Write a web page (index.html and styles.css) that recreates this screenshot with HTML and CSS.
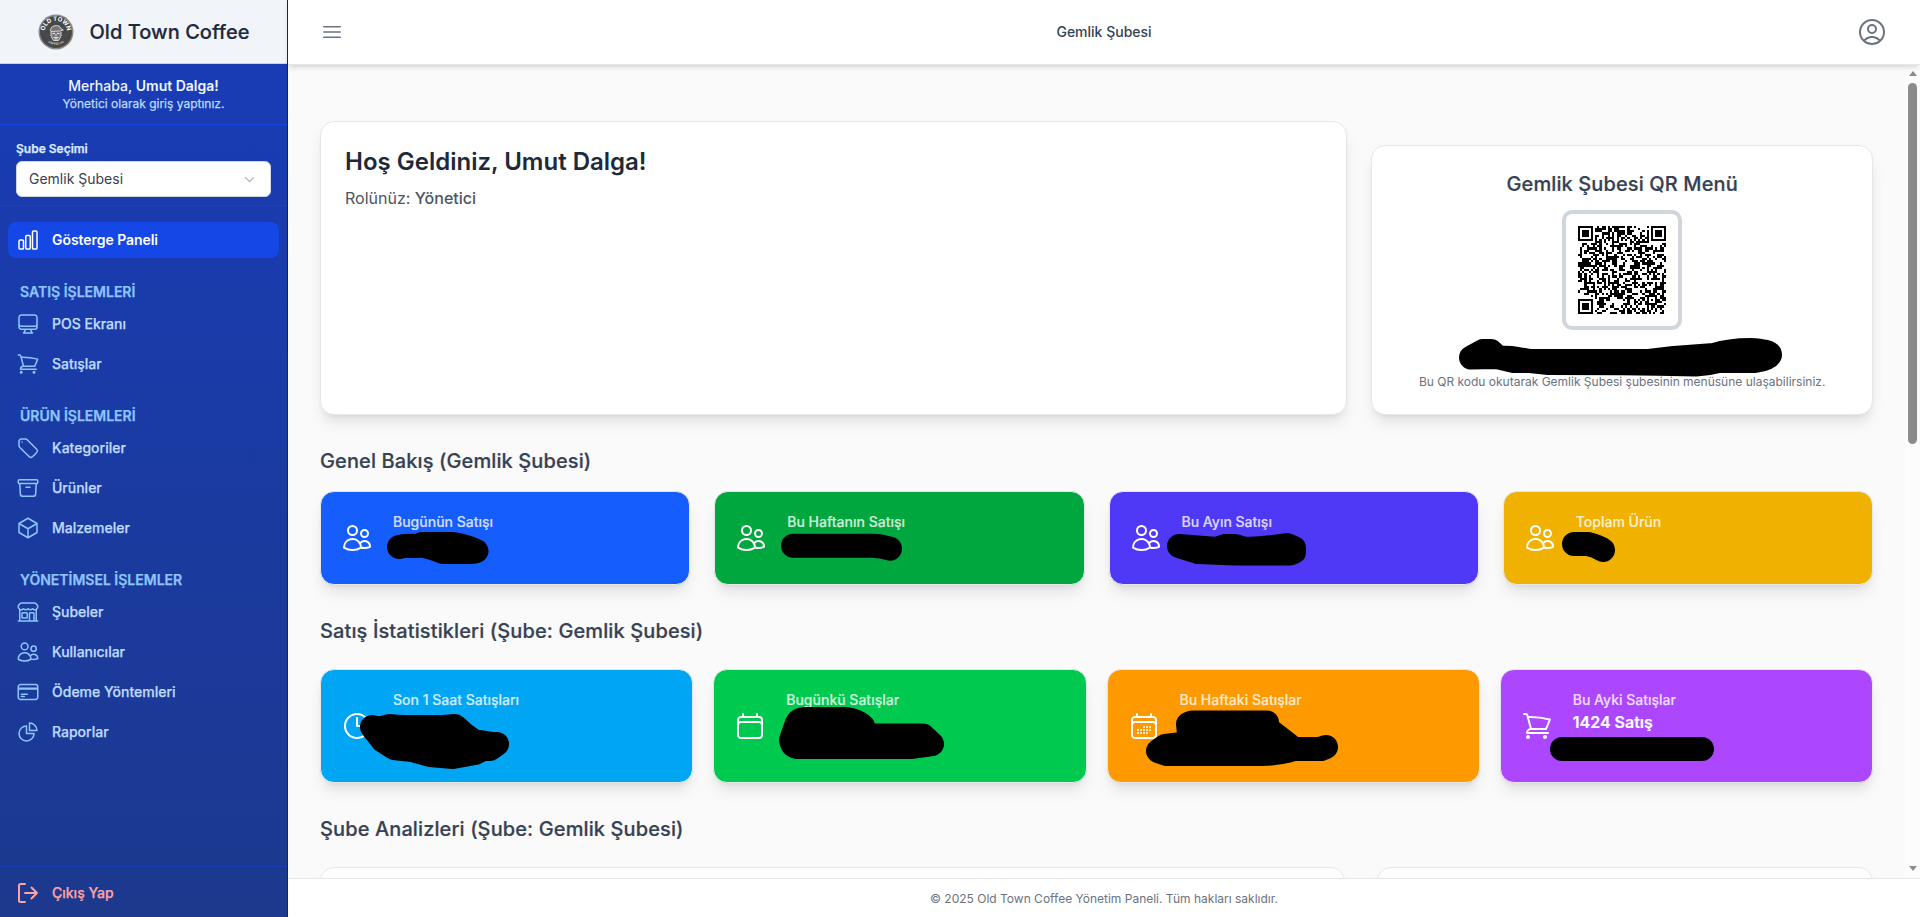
FILE: index.html
```html
<!DOCTYPE html>
<html lang="tr">
<head>
<meta charset="utf-8">
<title>Old Town Coffee</title>
<link rel="stylesheet" href="styles.css">
</head>
<body>
<svg class="sprite" aria-hidden="true">
  <symbol id="chart" viewBox="0 0 24 24"><path d="M3 13.125C3 12.504 3.504 12 4.125 12h2.25c.621 0 1.125.504 1.125 1.125v6.75C7.5 20.496 6.996 21 6.375 21h-2.25A1.125 1.125 0 0 1 3 19.875v-6.75ZM9.75 8.625c0-.621.504-1.125 1.125-1.125h2.25c.621 0 1.125.504 1.125 1.125v11.25c0 .621-.504 1.125-1.125 1.125h-2.25a1.125 1.125 0 0 1-1.125-1.125V8.625ZM16.5 4.125c0-.621.504-1.125 1.125-1.125h2.25C20.496 3 21 3.504 21 4.125v15.75c0 .621-.504 1.125-1.125 1.125h-2.25a1.125 1.125 0 0 1-1.125-1.125V4.125Z"/></symbol>
  <symbol id="monitor" viewBox="0 0 24 24"><path d="M9 17.25v1.007a3 3 0 0 1-.879 2.122L7.5 21h9l-.621-.621A3 3 0 0 1 15 18.257V17.25m6-12V15a2.25 2.25 0 0 1-2.25 2.25H5.25A2.25 2.25 0 0 1 3 15V5.25m18 0A2.25 2.25 0 0 0 18.75 3H5.25A2.25 2.25 0 0 0 3 5.25m18 0V12a2.25 2.25 0 0 1-2.25 2.25H5.25A2.25 2.25 0 0 1 3 12V5.25"/></symbol>
  <symbol id="cart" viewBox="0 0 24 24"><path d="M2.25 3h1.386c.51 0 .955.343 1.087.835l.383 1.437M7.5 14.25a3 3 0 0 0-3 3h15.75m-12.75-3h11.218c1.121-2.3 2.1-4.684 2.924-7.138a60.114 60.114 0 0 0-16.536-1.84M7.5 14.25 5.106 5.272M6 20.25a.75.75 0 1 1-1.5 0 .75.75 0 0 1 1.5 0Zm12.75 0a.75.75 0 1 1-1.5 0 .75.75 0 0 1 1.5 0Z"/></symbol>
  <symbol id="tag" viewBox="0 0 24 24"><path d="M9.568 3H5.25A2.25 2.25 0 0 0 3 5.25v4.318c0 .597.237 1.17.659 1.591l9.581 9.581c.699.699 1.78.872 2.607.33a18.095 18.095 0 0 0 5.223-5.223c.542-.827.369-1.908-.33-2.607L11.16 3.66A2.25 2.25 0 0 0 9.568 3Z"/><path d="M6 6h.008v.008H6V6Z"/></symbol>
  <symbol id="archive" viewBox="0 0 24 24"><path d="m20.25 7.5-.625 10.632a2.25 2.25 0 0 1-2.247 2.118H6.622a2.25 2.25 0 0 1-2.247-2.118L3.75 7.5M10 11.25h4M3.375 7.5h17.25c.621 0 1.125-.504 1.125-1.125v-1.5c0-.621-.504-1.125-1.125-1.125H3.375c-.621 0-1.125.504-1.125 1.125v1.5c0 .621.504 1.125 1.125 1.125Z"/></symbol>
  <symbol id="cube" viewBox="0 0 24 24"><path d="m21 7.5-9-5.25L3 7.5m18 0-9 5.25m9-5.25v9l-9 5.25M3 7.5l9 5.25M3 7.5v9l9 5.25m0-9v9"/></symbol>
  <symbol id="store" viewBox="0 0 24 24"><path d="M13.5 21v-7.5a.75.75 0 0 1 .75-.75h3a.75.75 0 0 1 .75.75V21m-4.5 0H2.36m11.14 0H18m0 0h3.64m-1.39 0V9.349M3.75 21V9.349m0 0a3.001 3.001 0 0 0 3.75-.615A2.993 2.993 0 0 0 9.75 9.75c.896 0 1.7-.393 2.25-1.016a2.993 2.993 0 0 0 2.25 1.016c.896 0 1.7-.393 2.25-1.015a3.001 3.001 0 0 0 3.75.614m-16.5 0a3.004 3.004 0 0 1-.621-4.72l1.189-1.19A1.5 1.5 0 0 1 5.378 3h13.243a1.5 1.5 0 0 1 1.06.44l1.19 1.189a3 3 0 0 1-.621 4.72M6.75 18h3.75a.75.75 0 0 0 .75-.75V13.5a.75.75 0 0 0-.75-.75H6.75a.75.75 0 0 0-.75.75v3.75c0 .414.336.75.75.75Z"/></symbol>
  <symbol id="users" viewBox="0 0 24 24"><path d="M15 19.128a9.38 9.38 0 0 0 2.625.372 9.337 9.337 0 0 0 4.121-.952 4.125 4.125 0 0 0-7.533-2.493M15 19.128v-.003c0-1.113-.285-2.16-.786-3.07M15 19.128v.106A12.318 12.318 0 0 1 8.624 21c-2.331 0-4.512-.645-6.374-1.766l-.001-.109a6.375 6.375 0 0 1 11.964-3.07M12 6.375a3.375 3.375 0 1 1-6.75 0 3.375 3.375 0 0 1 6.75 0Zm8.25 2.25a2.625 2.625 0 1 1-5.25 0 2.625 2.625 0 0 1 5.25 0Z"/></symbol>
  <symbol id="card" viewBox="0 0 24 24"><path d="M2.25 8.25h19.5M2.25 9h19.5m-16.5 5.25h6m-6 2.25h3m-3.75 3h15a2.25 2.25 0 0 0 2.25-2.25V6.75A2.25 2.25 0 0 0 19.5 4.5h-15a2.25 2.25 0 0 0-2.25 2.25v10.5A2.25 2.25 0 0 0 4.5 19.5Z"/></symbol>
  <symbol id="pie" viewBox="0 0 24 24"><path d="M10.5 6a7.5 7.5 0 1 0 7.5 7.5h-7.5V6Z"/><path d="M13.5 10.5H21A7.5 7.5 0 0 0 13.5 3v7.5Z"/></symbol>
  <symbol id="logout" viewBox="0 0 24 24"><path d="M9 3H4.500A1.500 1.500 0 0 0 3 4.500v15A1.500 1.500 0 0 0 4.500 21H9M9 12h12M15.500 6.500 21 12l-5.500 5.500"/></symbol>
  <symbol id="bars" viewBox="0 0 24 24"><path d="M3.750 6.750h16.500M3.750 12h16.500m-16.500 5.250h16.500"/></symbol>
  <symbol id="person" viewBox="0 0 24 24"><path d="M17.982 18.725A7.488 7.488 0 0 0 12 15.750a7.488 7.488 0 0 0-5.982 2.975m11.963 0a9 9 0 1 0-11.963 0m11.963 0A8.966 8.966 0 0 1 12 21a8.966 8.966 0 0 1-5.982-2.275M15 9.750a3 3 0 1 1-6 0 3 3 0 0 1 6 0Z"/></symbol>
  <symbol id="clock" viewBox="0 0 24 24"><path d="M12 6v6h4.500m4.500 0a9 9 0 1 1-18 0 9 9 0 0 1 18 0Z"/></symbol>
  <symbol id="calendar" viewBox="0 0 24 24"><path d="M6.750 3v2.250M17.250 3v2.250M3 18.750V7.500a2.250 2.250 0 0 1 2.250-2.250h13.500A2.250 2.250 0 0 1 21 7.500v11.250m-18 0A2.250 2.250 0 0 0 5.250 21h13.500A2.250 2.250 0 0 0 21 18.750m-18 0v-7.500A2.250 2.250 0 0 1 5.250 9h13.500A2.250 2.250 0 0 1 21 11.250v7.500"/></symbol>
  <symbol id="days" viewBox="0 0 24 24"><use href="#calendar"/><path d="M12 12.750h.008v.008H12ZM12 15h.008v.008H12ZM12 17.250h.008v.008H12ZM9.750 15h.008v.008H9.750ZM9.750 17.250h.008v.008H9.750ZM7.500 15h.008v.008H7.500ZM7.500 17.250h.008v.008H7.500ZM14.250 12.750h.008v.008h-.008ZM14.250 15h.008v.008h-.008ZM14.250 17.250h.008v.008h-.008ZM16.500 12.750h.008v.008h-.008ZM16.500 15h.008v.008h-.008Z"/></symbol>
</svg>

<div class="app">
  <aside class="sidebar">
    <div class="brand">
      <svg class="logo" viewBox="0 0 36 36">
        <circle cx="18" cy="18" r="17.500" fill="#8b8b8b"/>
        <circle cx="18" cy="18" r="16" fill="#484848"/>
        <path id="arc-top" d="M6.800 18a11.200 11.200 0 0 1 22.400 0" fill="none"/>
        <path id="arc-bottom" d="M4.500 20a13.800 13.800 0 0 0 27 0" fill="none"/>
        <text class="logo-name"><textPath href="#arc-top" startOffset="50%">OLD TOWN</textPath></text>
        <text class="logo-sub"><textPath href="#arc-bottom" startOffset="50%">COFFEE CO</textPath></text>
        <path d="M12.300 15.500q1-4 6-4 4 0 4.500 3l2.500 1.500-2.500 1-10 .5ZM13 18v4l2.500 4.500h5L23 22v-4" fill="#777" stroke="#d6d6d6" stroke-width="1"/>
        <path d="M14.500 19.500h2.500m2 0h2.500M18 20v2m-2.500 1.500h5M16.500 25h3" fill="none" stroke="#e5e5e5" stroke-width="1"/>
      </svg>
      <span class="brand-name">Old Town Coffee</span>
    </div>
    <div class="greeting">
      <div class="greeting-name">Merhaba, <b>Umut Dalga!</b></div>
      <div class="greeting-role">Yönetici olarak giriş yaptınız.</div>
    </div>
    <div class="branch">
      <div class="branch-label">Şube Seçimi</div>
      <div class="select"><span>Gemlik Şubesi</span>
        <svg class="chevron" viewBox="0 0 12 12"><path d="M2 4l4 4 4-4"/></svg></div>
    </div>
    <nav class="nav">
      <a class="item active"><svg class="icon"><use href="#chart"/></svg>Gösterge Paneli</a>
      <div class="group">
        <div class="group-title">SATIŞ İŞLEMLERİ</div>
        <a class="item"><svg class="icon"><use href="#monitor"/></svg>POS Ekranı</a>
        <a class="item"><svg class="icon"><use href="#cart"/></svg>Satışlar</a>
      </div>
      <div class="group">
        <div class="group-title">ÜRÜN İŞLEMLERİ</div>
        <a class="item"><svg class="icon"><use href="#tag"/></svg>Kategoriler</a>
        <a class="item"><svg class="icon"><use href="#archive"/></svg>Ürünler</a>
        <a class="item"><svg class="icon"><use href="#cube"/></svg>Malzemeler</a>
      </div>
      <div class="group">
        <div class="group-title">YÖNETİMSEL İŞLEMLER</div>
        <a class="item"><svg class="icon"><use href="#store"/></svg>Şubeler</a>
        <a class="item"><svg class="icon"><use href="#users"/></svg>Kullanıcılar</a>
        <a class="item"><svg class="icon"><use href="#card"/></svg>Ödeme Yöntemleri</a>
        <a class="item"><svg class="icon"><use href="#pie"/></svg>Raporlar</a>
      </div>
    </nav>
    <div class="logout"><a class="item"><svg class="icon"><use href="#logout"/></svg>Çıkış Yap</a></div>
  </aside>

  <div class="page">
    <header class="topbar">
      <svg class="icon"><use href="#bars"/></svg>
      <span class="topbar-title">Gemlik Şubesi</span>
      <svg class="icon profile"><use href="#person"/></svg>
    </header>
    <div class="viewport">
      <main class="content">
        <section class="hero">
          <div class="panel welcome">
            <h1>Hoş Geldiniz, Umut Dalga!</h1>
            <p>Rolünüz: <span class="role">Yönetici</span></p>
          </div>
          <div class="panel qr-panel">
            <h2>Gemlik Şubesi QR Menü</h2>
            <div class="qr-frame"><svg id="qr" class="qr" viewBox="0 0 41 41" shape-rendering="crispEdges"></svg></div>
            <p>Bu QR kodu okutarak Gemlik Şubesi şubesinin menüsüne ulaşabilirsiniz.</p>
          </div>
        </section>
        <h2>Genel Bakış (Gemlik Şubesi)</h2>
        <section class="stats overview">
          <div class="stat blue"><svg class="icon"><use href="#users"/></svg><div>Bugünün Satışı</div></div>
          <div class="stat green"><svg class="icon"><use href="#users"/></svg><div>Bu Haftanın Satışı</div></div>
          <div class="stat indigo"><svg class="icon"><use href="#users"/></svg><div>Bu Ayın Satışı</div></div>
          <div class="stat yellow"><svg class="icon"><use href="#users"/></svg><div>Toplam Ürün</div></div>
        </section>
        <h2>Satış İstatistikleri (Şube: Gemlik Şubesi)</h2>
        <section class="stats sales">
          <div class="stat sky"><svg class="icon"><use href="#clock"/></svg><div>Son 1 Saat Satışları</div></div>
          <div class="stat lime"><svg class="icon"><use href="#calendar"/></svg><div>Bugünkü Satışlar</div></div>
          <div class="stat orange"><svg class="icon"><use href="#days"/></svg><div>Bu Haftaki Satışlar</div></div>
          <div class="stat purple"><svg class="icon"><use href="#cart"/></svg><div>Bu Ayki Satışlar<strong>1424 Satış</strong></div></div>
        </section>
        <h2>Şube Analizleri (Şube: Gemlik Şubesi)</h2>
        <section class="analysis"><div class="panel wide"></div><div class="panel"></div></section>
      </main>
      <div class="scrollbar"><i class="up"></i><i class="thumb"></i><i class="down"></i></div>
    </div>
    <footer class="footer">© 2025 Old Town Coffee Yönetim Paneli. Tüm hakları saklıdır.</footer>
  </div>
</div>
<!-- Marker strokes over the hidden values, drawn with a round 24px pen -->
<svg class="ink" viewBox="0 0 1920 917">
  <path d="M1471 357.500L1483 351H1491L1498 357.500L1512 358L1530 361H1649L1674 358L1714 355Q1730 350 1750 350Q1770 351 1770 355Q1768 359 1755 361H1719Q1708 364 1696 364.500Q1620 363 1549 363L1530 361H1514L1497 357Z"/>
  <path d="M399 547L404 546H418L422 544H452Q466 546 476.500 551Q476 552 470 552H443Q430 547 420 545.500L404 546Z"/>
  <path d="M793 545.700H872Q882 546 890 548.700Q882 546 872 545.700Z"/>
  <path d="M1179 546L1217 549L1225 546H1235L1245 549Q1270 548 1287 545L1294 548V552L1290 553.500H1235L1198 552Z"/>
  <path d="M1574 544H1588Q1597 546 1603 550Q1597 546 1588 544Z"/>
  <path d="M372 727L378 729L389 726Q397 727 405 727H443L455 726L464 734L474 741L493 744L497 744L490 749H483L475 753L453 757L430 755L412 750L394 748L383 741Z"/>
  <path d="M791 740L797 723Q799 719 805 719H846Q856 720 863 726V735.500H923L932 744L925 745L912 747H797Q792 746 791 740Z"/>
  <path d="M1158 751L1165 746L1190 743L1188 724L1192 722.500H1267V728L1294 749H1320L1326 747L1321 749H1294Q1278 754 1262 754H1167Z"/>
  <path d="M1562 749H1702Z"/>
</svg>
<script src="script.js"></script>
</body>
</html>
```
FILE: styles.css
```css
* { box-sizing: border-box; }
body { margin: 0; font-family: Inter, "Noto Sans", sans-serif; font-size: 14px; line-height: 20px; color: #364153; }
h1, h2, p { margin: 0; }
h2 { font-size: 20px; line-height: 28px; font-weight: 500; letter-spacing: .11px; color: #364153; -webkit-text-stroke: .2px; }
.sprite { display: none; }
.icon { width: 24px; height: 24px; flex: none; fill: none; stroke: currentColor; stroke-width: 1.5; stroke-linecap: round; stroke-linejoin: round; }
.app { display: flex; width: 1920px; height: 917px; overflow: hidden; }

.sidebar { width: 288px; flex: none; display: flex; flex-direction: column; border-right: 1px solid #162456; background: linear-gradient(#193cb8, #1c398e); color: #fff; }
.brand { height: 64px; flex: none; display: flex; align-items: center; justify-content: center; gap: 15px; padding-left: 1px; background: #f1f5f9; border-bottom: 1px solid #cad5e2; }
.logo { width: 36px; height: 36px; }
.logo-name { font-size: 6px; font-weight: 700; fill: #fff; text-anchor: middle; }
.logo-sub { font-size: 3px; font-weight: 600; fill: #ddd; text-anchor: middle; }
.brand-name { font-size: 20px; line-height: 28px; font-weight: 500; letter-spacing: .05px; color: #1d293d; -webkit-text-stroke: .2px; }
.greeting { height: 61px; flex: none; padding-top: 12px; text-align: center; border-bottom: 1px solid #1447e6; }
.greeting-name { font-weight: 500; color: #eff6ff; }
.greeting-name b { font-weight: 600; }
.greeting-role, .branch-label, .item, .group-title { -webkit-text-stroke: .25px; }
.greeting-role { font-size: 12px; line-height: 16px; font-weight: 400; color: #bedbff; }
.branch { height: 81px; flex: none; padding: 16px 16px 0; border-bottom: 1px solid #1a40be; }
.branch-label { font-size: 12px; line-height: 16px; font-weight: 600; color: #dbeafe; margin-bottom: 4px; }
.select { height: 36px; display: flex; align-items: center; justify-content: space-between; padding: 0 14px 0 12px; border: 1px solid #d1d5dc; border-radius: 6px; background: #fff; color: #364153; }
.chevron { width: 13px; height: 13px; fill: none; stroke: #b5b8bd; stroke-width: 1.2; }
.nav { flex: 1; padding: 16px 8px; }
.item { display: flex; align-items: center; gap: 12px; height: 36px; padding: 0 8px; margin-bottom: 4px; border-radius: 6px; font-weight: 500; color: #bedbff; }
.item .icon { color: #8ec5ff; }
.item.active, .item.active .icon { color: #fff; }
.item.active { background: #1447e6; font-weight: 600; letter-spacing: -.05px; margin-bottom: 0; border-radius: 8px; -webkit-text-stroke: 0; }
.group { padding-top: 24px; margin-bottom: -4px; }
.group-title { height: 24px; padding: 0 12px; font-weight: 600; line-height: 20px; color: #8ec5ff; }
.logout { height: 51px; padding: 8px; border-top: 1px solid #193cb8; }
.logout .item, .logout .item .icon { color: #ffa2a2; }
.logout .icon { stroke-width: 2; }

.page { width: 1632px; display: flex; flex-direction: column; }
.topbar { height: 65px; flex: none; display: flex; align-items: center; justify-content: space-between; padding: 0 32px; background: #fff; border-bottom: 1px solid #e5e7eb; box-shadow: 0 4px 6px -1px #0000001a, 0 2px 4px -2px #0000001a; position: relative; z-index: 1; color: #6a7282; }
.topbar-title { font-weight: 500; color: #364153; padding-left: 8px; }
.profile { width: 32px; height: 32px; }
.viewport { height: 813px; display: flex; overflow: hidden; background: #fafafa; }
.content { width: 1617px; padding: 56px 32px 0; }
.hero { display: grid; grid-template-columns: repeat(3, 1fr); gap: 24px; margin-bottom: 32px; }
.panel { background: #fff; border: 1px solid #e5e7eb; border-radius: 14px; box-shadow: 0 10px 15px -3px #0000001a, 0 4px 6px -4px #0000001a; }
.welcome { grid-column: span 2; height: 294px; padding: 24px; }
.welcome h1 { font-size: 24px; line-height: 32px; font-weight: 600; color: #1e2939; }
.welcome p { margin-top: 8px; font-size: 16px; line-height: 24px; color: #4a5565; }
.role { font-weight: 500; }
.qr-panel { margin-top: 24px; height: 270px; padding: 24px; display: flex; flex-direction: column; align-items: center; }
.qr-frame { width: 120px; height: 120px; margin: 12px 0 44px; padding: 12px; border: 4px solid #d1d5dc; border-radius: 10px; }
.qr { display: block; width: 88px; height: 88px; }
.qr-panel p { font-size: 12px; line-height: 16px; color: #6a7282; white-space: nowrap; }
.stats { display: grid; grid-template-columns: repeat(4, 1fr); margin-bottom: 32px; }
.overview { gap: 24px; margin-top: 16px; }
.overview .stat { height: 94px; }
.sales { gap: 20px; margin-top: 24px; }
.sales .stat { height: 114px; }
.stat { display: flex; align-items: center; gap: 20px; padding: 20px; border: 1px solid #e5e7eb; border-radius: 14px; box-shadow: 0 10px 15px -3px #0000001a, 0 4px 6px -4px #0000001a; font-weight: 500; color: rgba(255, 255, 255, .78); }
.stat .icon { width: 32px; height: 32px; color: #fff; }
.stat div { align-self: flex-start; -webkit-text-stroke: .2px; }
.stat strong { display: block; font-size: 16px; line-height: 24px; font-weight: 600; color: #fff; }
.blue { background: #155dfc; }
.green { background: #00a63e; }
.indigo { background: #4f39f6; }
.yellow { background: #f0b100; }
.sky { background: #00a6f4; }
.lime { background: #00c950; }
.orange { background: #fe9a00; }
.purple { background: #ad46ff; }
.analysis { display: grid; grid-template-columns: repeat(3, 1fr); gap: 32px; margin-top: 24px; }
.analysis .panel { height: 300px; }
.analysis .wide { grid-column: span 2; }
.scrollbar { width: 15px; background: #fcfcfc; display: flex; flex-direction: column; align-items: center; padding: 6px 0 7px; }
.up, .down { border: 4.5px solid transparent; border-top: 0; border-bottom: 5px solid #8b8b8b; }
.down { border-top: 5px solid #8b8b8b; border-bottom: 0; margin-top: auto; }
.thumb { width: 9px; height: 361px; margin-top: 7px; border-radius: 5px; background: #8b8b8b; }
.footer { height: 39px; display: flex; align-items: center; justify-content: center; background: #fff; border-top: 1px solid #e5e7eb; font-size: 12px; line-height: 16px; color: #6a7282; padding-top: 2px; }
.ink { position: absolute; left: 0; top: 0; width: 1920px; height: 917px; pointer-events: none; z-index: 5; fill: #000; stroke: #000; stroke-width: 24; stroke-linecap: round; stroke-linejoin: round; }
```
FILE: script.js
```js
// Draws a version 6 sized code: finder, timing and alignment patterns around a data area.
(function () {
  var n = 41, seed = 20259, d = '';
  function rnd() { seed = (seed * 1103515245 + 12345) % 2147483648; return seed / 2147483648; }
  function ring(x, y, cx, cy) { return Math.max(Math.abs(x - cx), Math.abs(y - cy)); }
  for (var y = 0; y < n; y++) {
    for (var x = 0; x < n; x++) {
      var r = Math.min(ring(x, y, 3, 3), ring(x, y, 37, 3), ring(x, y, 3, 37));
      var a = ring(x, y, 34, 34), on = rnd() < 0.5;
      if (r <= 4) on = r !== 4 && r !== 2;
      else if (a <= 2) on = a !== 1;
      else if (x === 6 || y === 6) on = (x + y) % 2 === 0;
      if (on) d += 'M' + x + ' ' + y + 'h1v1h-1z';
    }
  }
  document.getElementById('qr').innerHTML = '<path d="' + d + '"/>';
})();
```
